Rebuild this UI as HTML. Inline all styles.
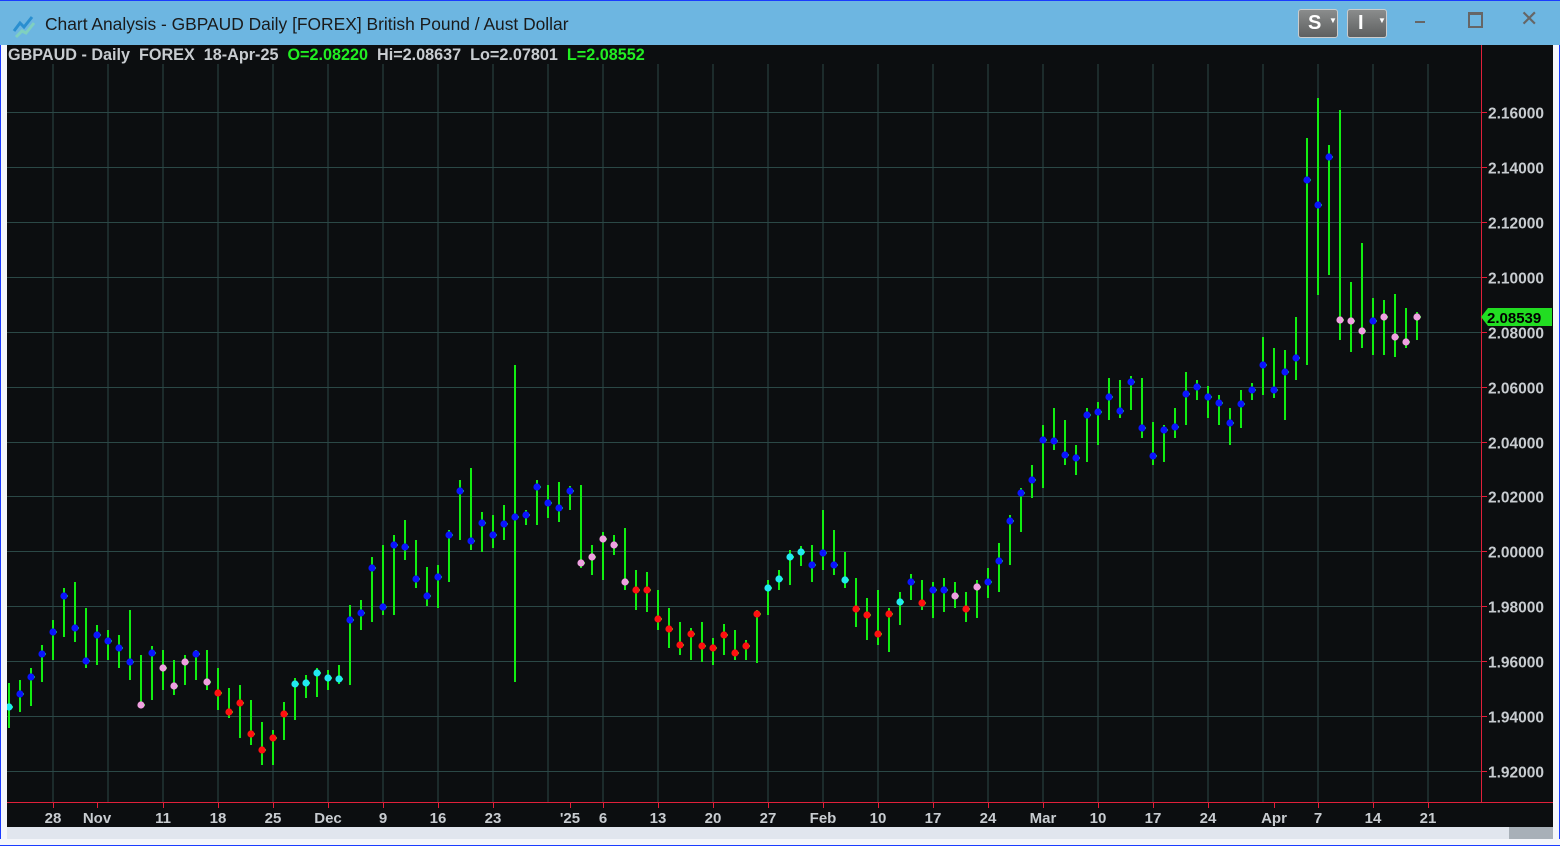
<!DOCTYPE html>
<html><head><meta charset="utf-8"><style>
html,body{margin:0;padding:0;width:1560px;height:846px;overflow:hidden;background:#0c0e10;font-family:"Liberation Sans",sans-serif}
#tb{position:absolute;left:0;top:0;width:1560px;height:45px;background:#6db6e1;border-top:1px solid #1a3cff;box-sizing:border-box}
#tt{position:absolute;left:45px;top:13px;font-size:17.4px;color:#1a1a1a}
.btn{position:absolute;top:8px;width:40px;height:29px;background:linear-gradient(#8a8c8c,#5e6060);border:1px solid #ccc;border-radius:3px;color:#fff;font-weight:bold;font-size:20px;box-sizing:border-box}
#hdr{position:absolute;left:8px;top:46px;font-size:16.2px;font-weight:bold;color:#c8ccd0;white-space:pre}
.g{color:#22ee22}
#sb{position:absolute;left:7px;top:827px;width:1546px;height:12px;background:#e1e6ee}
#th{position:absolute;left:1509px;top:827px;width:44px;height:12px;background:#a8b0b8}
#bot{position:absolute;left:0;top:839px;width:1560px;height:7px;background:#f4f6fa;border-bottom:1px solid #1a3cff;box-sizing:border-box}
#lb,#rb{position:absolute;top:45px;width:7px;height:794px;background:#f4f6fa}
#lb{left:0;border-left:1px solid #1a3cff;box-sizing:border-box}#rb{left:1553px;border-right:1px solid #1a3cff;box-sizing:border-box}
svg{position:absolute;left:0;top:0}
</style></head><body>
<div id="tb"><div id="tt">Chart Analysis - GBPAUD Daily [FOREX] British Pound / Aust Dollar</div>
<svg width="30" height="30" style="left:10px;top:10px"><path d="M4 20 L10 12 L14 16 L22 6" stroke="#2a8fd0" stroke-width="3" fill="none"/><path d="M6 26 L12 20 L16 22 L24 12" stroke="#7fd0c0" stroke-width="3" fill="none"/></svg>
<div class="btn" style="left:1298px"><span style="position:absolute;left:9px;top:2px">S</span><span style="position:absolute;left:30px;top:6px;font-size:8px">▼</span></div>
<div class="btn" style="left:1347px"><span style="position:absolute;left:10px;top:2px">I</span><span style="position:absolute;left:30px;top:6px;font-size:8px">▼</span></div>
<div style="position:absolute;left:1415px;top:20px;width:10px;height:2px;background:#666"></div>
<div style="position:absolute;left:1468px;top:11px;width:11px;height:11px;border:2px solid #666;border-top-width:3px"></div>
<div style="position:absolute;left:1520px;top:5px;font-size:22px;color:#666">✕</div>
</div>
<div id="hdr">GBPAUD - Daily  FOREX  18-Apr-25  <span class="g">O=2.08220</span>  Hi=2.08637  Lo=2.07801  <span class="g">L=2.08552</span></div>
<svg id="c" width="1560" height="846"></svg>
<div id="lb"></div><div id="rb"></div>
<div id="sb"></div><div id="th"></div><div id="bot"></div>
<script>
var s='';
for(var x=53;x<=1428;x+=55)s+='<line x1="'+x+'" y1="64" x2="'+x+'" y2="802" stroke="#2b4846" stroke-width="1"/>';
var pr=['2.16000','2.14000','2.12000','2.10000','2.08000','2.06000','2.04000','2.02000','2.00000','1.98000','1.96000','1.94000','1.92000'];
for(var k=0;k<13;k++){var y=Math.round(112+54.92*k)+0.5;s+='<line x1="7" y1="'+y+'" x2="1481" y2="'+y+'" stroke="#2b4846"/><line x1="1481" y1="'+y+'" x2="1487" y2="'+y+'" stroke="#e0203a"/><text x="1488" y="'+(y+6)+'" fill="#c8ccd0" font-size="15.5" font-weight="bold">'+pr[k]+'</text>';}
s+='<line x1="1481.5" y1="45" x2="1481.5" y2="802" stroke="#e0203a"/><line x1="7" y1="802.5" x2="1553" y2="802.5" stroke="#e0203a"/>';
var dl=[[53,'28'],[97,'Nov'],[163,'11'],[218,'18'],[273,'25'],[328,'Dec'],[383,'9'],[438,'16'],[493,'23'],[570,"'25"],[603,'6'],[658,'13'],[713,'20'],[768,'27'],[823,'Feb'],[878,'10'],[933,'17'],[988,'24'],[1043,'Mar'],[1098,'10'],[1153,'17'],[1208,'24'],[1274,'Apr'],[1318,'7'],[1373,'14'],[1428,'21']];
dl.forEach(function(d){s+='<line x1="'+(d[0]+.5)+'" y1="802" x2="'+(d[0]+.5)+'" y2="808" stroke="#e0203a"/><text x="'+d[0]+'" y="823" text-anchor="middle" fill="#c8ccd0" font-size="15" font-weight="bold">'+d[1]+'</text>';});
var D="707c683728 694b680712 677b668706 654b645682 632b620660 596b588637 628b582642 661b608668 635b625665 641b630660 648b635668 662b610680 705p655708 653b646700 668p650690 686p660695 662p655685 654b650680 682p650690 693r668710 712r688718 703r685738 734r700745 750r722765 738r730765 714r702740 684c678720 683c675698 673c668697 678c670690 679c665684 620b605685 613b600630 568b557622 607b545615 545b535615 547b520560 579b540588 596b567606 577b565608 535b530582 491b480540 541b468550 523b512552 535b515548 524b505540 517b365682 515b510525 487b480525 503b485518 508b482522 491b486510 563p485568 557p545575 539p532580 545p535555 582p528590 590r570610 590r572612 619r590630 629r608648 645r622655 634r628660 646r622662 648r638665 635r624655 653r630660 646r640660 614r610663 588c580615 579c570590 557c550585 552c546566 565b545582 553b510570 565b530575 580c552588 609r578627 615r598640 634r590645 614r608652 602c592625 582b574600 603r580610 590b582618 590b578612 596p582608 609r592622 587p580618 582b568598 561b543592 521b515565 493b488532 480b465498 440b425488 441b408450 455b420465 458b445475 415b408462 412b402445 397b378420 411b380418 382b376410 428b378438 456b422465 430b425462 427b408438 394b372425 387b380400 397b386418 403b395425 423b408445 404b390428 390b383400 365b337395 390b348398 372b350420 358b317380 180b138365 205b098295 157b145275 320p110340 321p282352 331p243348 321b298355 317p300355 337p294357 342p308348 317p312340".split(' ');
var col={b:'#0a14ff',c:'#22e8f0',p:'#f0a0e0',r:'#ff1010'};
D.forEach(function(t,i){var x=9+11*i,c=+t.substr(0,3),k=t[3],h=+t.substr(4,3),l=+t.substr(7,3);
s+='<line x1="'+x+'" y1="'+h+'" x2="'+x+'" y2="'+l+'" stroke="#11ee11" stroke-width="2"/><line x1="'+x+'" y1="'+c+'" x2="'+(x+4)+'" y2="'+c+'" stroke="#11ee11" stroke-width="2"/><circle cx="'+x+'" cy="'+c+'" r="3.6" fill="'+col[k]+'"/>';});
s+='<path d="M1481 317 L1488 308 L1552 308 L1552 326 L1488 326 Z" fill="#22dd22"/><text x="1487" y="323" fill="#000" font-size="15" font-weight="bold">2.08539</text>';
document.getElementById('c').innerHTML=s;
</script>
</body></html>
